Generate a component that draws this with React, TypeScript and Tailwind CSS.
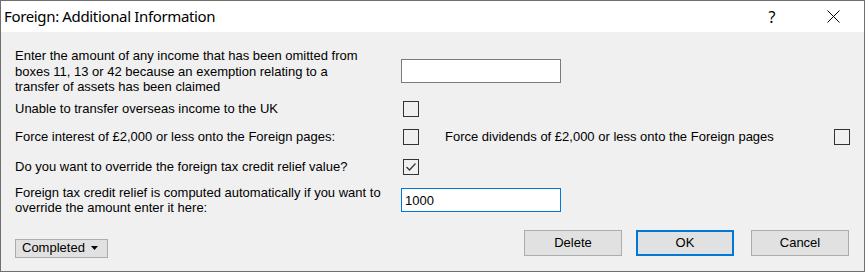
import { useState } from "react";

function Check({ checked, onToggle }: { checked: boolean; onToggle: () => void }) {
  return (
    <button
      onClick={onToggle}
      className="w-4 h-4 shrink-0 border border-[#333333] bg-[#f0f0f0] flex items-center justify-center"
    >
      {checked && (
        <svg width="12" height="10" viewBox="0 0 12 10" fill="none">
          <path d="M1.5 5l3 3L10.5 1.5" stroke="#3a3a3a" strokeWidth="1.3" />
        </svg>
      )}
    </button>
  );
}

function Btn({ label, primary }: { label: string; primary?: boolean }) {
  return (
    <button
      className={`w-[98px] h-[26px] bg-[#e1e1e1] text-[13px] text-black ${
        primary ? "border-2 border-[#0078d7]" : "border border-[#adadad]"
      }`}
    >
      {label}
    </button>
  );
}

export default function App() {
  const [unable, setUnable] = useState(false);
  const [interest, setInterest] = useState(false);
  const [dividends, setDividends] = useState(false);
  const [override, setOverride] = useState(true);
  const [amount, setAmount] = useState("1000");

  return (
    <div className="w-[865px] h-[272px] border border-[#6f6f6f] bg-[#f0f0f0] flex flex-col overflow-hidden font-['Liberation_Sans',Arial,sans-serif] text-black">
      {/* Title bar */}
      <div className="h-[31px] bg-white flex items-center shrink-0">
        <span className="pl-[3px] text-[15px] tracking-[-0.35px] font-['Noto_Sans',sans-serif]">
          Foreign: Additional Information
        </span>
        <span className="ml-auto w-4 text-center text-[16px] font-['Noto_Sans',sans-serif]">?</span>
        <svg className="ml-[47px] mr-[24px]" width="13" height="13" viewBox="0 0 13 13">
          <path d="M0.5 0.5l12 12M12.5 0.5l-12 12" stroke="#000" strokeWidth="1" />
        </svg>
      </div>

      {/* Body */}
      <div className="flex flex-col pl-[14px] pr-[14px] text-[13px] leading-[15.5px]">
        <div className="flex items-center mt-[16px]">
          <p className="w-[386px]">
            Enter the amount of any income that has been omitted from
            <br />
            boxes 11, 13 or 42 because an exemption relating to a
            <br />
            transfer of assets has been claimed
          </p>
          <input className="w-[160px] h-6 bg-white border border-[#7a7a7a] outline-none px-1" />
        </div>

        <div className="flex items-center mt-[6px] h-4">
          <p className="w-[388px]">Unable to transfer overseas income to the UK</p>
          <Check checked={unable} onToggle={() => setUnable(!unable)} />
        </div>

        <div className="flex items-center mt-3 h-4">
          <p className="w-[388px]">Force interest of £2,000 or less onto the Foreign pages:</p>
          <Check checked={interest} onToggle={() => setInterest(!interest)} />
          <p className="ml-[26px]">Force dividends of £2,000 or less onto the Foreign pages</p>
          <div className="ml-auto">
            <Check checked={dividends} onToggle={() => setDividends(!dividends)} />
          </div>
        </div>

        <div className="flex items-center mt-[14px] h-4">
          <p className="w-[388px]">Do you want to override the foreign tax credit relief value?</p>
          <Check checked={override} onToggle={() => setOverride(!override)} />
        </div>

        <div className="flex items-center mt-[10px]">
          <p className="w-[386px]">
            Foreign tax credit relief is computed automatically if you want to
            <br />
            override the amount enter it here:
          </p>
          <input
            value={amount}
            onChange={(e) => setAmount(e.target.value)}
            className="w-[160px] h-6 bg-white border border-[#0078d7] outline-none px-[3px] text-[13px]"
          />
        </div>

        <div className="flex items-start mt-[14px]">
          <button className="mt-[9px] w-[93px] h-[19px] bg-[#e1e1e1] border border-[#adadad] flex items-center pl-[6px] gap-[6px]">
            <span>Completed</span>
            <svg width="7" height="4" viewBox="0 0 7 4">
              <path d="M0 0h7L3.5 4z" fill="#000" />
            </svg>
          </button>
          <div className="ml-auto mr-[1px] flex gap-[14px]">
            <Btn label="Delete" />
            <Btn label="OK" primary />
            <div className="ml-[3px]">
              <Btn label="Cancel" />
            </div>
          </div>
        </div>
      </div>
    </div>
  );
}
